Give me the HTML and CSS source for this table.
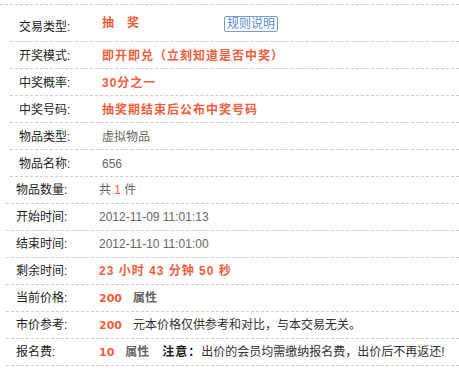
FILE: index.html
```html
<!DOCTYPE html>
<html lang="zh">
<head>
<meta charset="utf-8">
<title>交易信息</title>
<link rel="stylesheet" href="styles.css">
</head>
<body>
<div class="info">
  <div class="group group-a">
    <div class="row row-first">
      <span class="label">交易类型:</span>
      <span class="value value-first red bold">抽<span class="gap">奖</span></span>
      <span class="rule-btn">规则说明</span>
    </div>
    <div class="row">
      <span class="label">开奖模式:</span>
      <span class="value red bold wide">即开即兑（立刻知道是否中奖）</span>
    </div>
    <div class="row">
      <span class="label">中奖概率:</span>
      <span class="value red bold wide">30分之一</span>
    </div>
    <div class="row">
      <span class="label">中奖号码:</span>
      <span class="value red bold wide">抽奖期结束后公布中奖号码</span>
    </div>
    <div class="row">
      <span class="label">物品类型:</span>
      <span class="value grey">虚拟物品</span>
    </div>
    <div class="row">
      <span class="label">物品名称:</span>
      <span class="value grey">656</span>
    </div>
  </div>
  <div class="group group-b">
    <div class="row">
      <span class="label">物品数量:</span>
      <span class="value grey">共 <span class="red">1</span> 件</span>
    </div>
    <div class="row">
      <span class="label">开始时间:</span>
      <span class="value grey">2012-11-09 11:01:13</span>
    </div>
    <div class="row">
      <span class="label">结束时间:</span>
      <span class="value grey">2012-11-10 11:01:00</span>
    </div>
    <div class="row">
      <span class="label">剩余时间:</span>
      <span class="value red bold countdown">23 小时 43 分钟 50 秒</span>
    </div>
    <div class="row">
      <span class="label">当前价格:</span>
      <span class="value"><span class="price">200</span><span class="attr">属性</span></span>
    </div>
    <div class="row">
      <span class="label">市价参考:</span>
      <span class="value"><span class="price">200</span><span class="note">元本价格仅供参考和对比，与本交易无关。</span></span>
    </div>
    <div class="row">
      <span class="label">报名费:</span>
      <span class="value"><span class="price">10</span><span class="attr">属性</span><span class="warn">注意：</span>出价的会员均需缴纳报名费，出价后不再返还!</span>
    </div>
  </div>
</div>
</body>
</html>
```

FILE: styles.css
```css
html, body {
  margin: 0;
  padding: 0;
  background: #fff;
}

body {
  font-family: "Liberation Sans", "Noto Sans CJK SC", sans-serif;
  font-size: 12px;
  color: #333;
  width: 459px;
  height: 372px;
  overflow: hidden;
}

.info {
  margin-top: 4px;
  border-top: 1px dashed #ccc;
}

.group-a {
  margin-left: 10px;
}

.group-b {
  margin-left: 6px;
}

.row {
  display: flex;
  align-items: flex-start;
  white-space: nowrap;
  border-bottom: 1px dashed #ccc;
}

.group-a .row {
  height: 23px;
  padding-top: 3px;
  line-height: 23px;
}

.group-b .row {
  height: 25px;
  padding-top: 1px;
  line-height: 25px;
}

.label {
  flex: none;
  width: 83px;
  color: #1e1e1e;
}

.group-a .label {
  padding-left: 9px;
}

.group-b .label {
  padding-left: 10px;
}

.group-a .row-first {
  height: 36px;
  padding-top: 0;
}

.row-first .label {
  margin-top: 11px;
}

.value-first {
  flex: none;
  width: 122px;
  margin-top: 7px;
}

.gap {
  margin-left: 13px;
}

.rule-btn {
  flex: none;
  margin-top: 11px;
  height: 14px;
  line-height: 14px;
  padding: 0 2px;
  border: 1px solid #6f9fd6;
  border-radius: 2px;
  color: #5a8ccb;
  font-size: 12px;
}

.red {
  color: #f0603c;
}

.grey {
  color: #666;
}

.bold {
  font-weight: bold;
}

.wide {
  letter-spacing: 1px;
}

.countdown {
  letter-spacing: 1px;
}

.price {
  color: #f0603c;
  font-family: "DejaVu Sans", sans-serif;
  font-weight: bold;
  font-size: 11px;
  margin-right: 11px;
}

.attr {
  color: #666;
  font-weight: bold;
  margin-right: 13px;
}

.note {
  color: #333;
}

.warn {
  color: #1e1e1e;
  font-weight: bold;
  letter-spacing: 1px;
}
```
